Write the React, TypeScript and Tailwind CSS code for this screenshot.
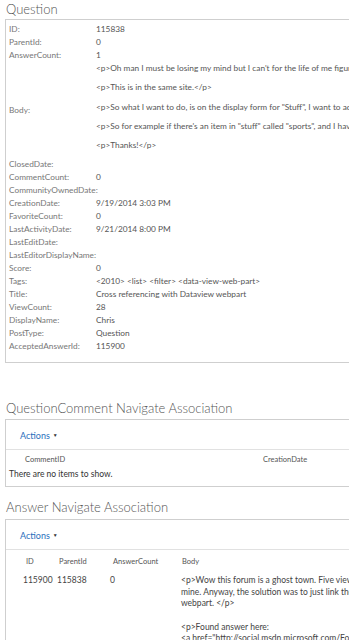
const fields: [string, string][] = [
  ["ID:", "115838"],
  ["ParentId:", "0"],
  ["AnswerCount:", "1"],
]

const bodyLines = [
  "<p>Oh man I must be losing my mind but I can't for the life of me figure out how to do this.</p>",
  "<p>This is in the same site.</p>",
  "<p>So what I want to do, is on the display form for \"Stuff\", I want to add a list of related items.</p>",
  "<p>So for example if there's an item in \"stuff\" called \"sports\", and I have a list of things.</p>",
  "<p>Thanks!</p>",
]

const moreFields: [string, string][] = [
  ["ClosedDate:", ""],
  ["CommentCount:", "0"],
  ["CommunityOwnedDate:", ""],
  ["CreationDate:", "9/19/2014 3:03 PM"],
  ["FavoriteCount:", "0"],
  ["LastActivityDate:", "9/21/2014 8:00 PM"],
  ["LastEditDate:", ""],
  ["LastEditorDisplayName:", ""],
  ["Score:", "0"],
  ["Tags:", "<2010> <list> <filter> <data-view-web-part>"],
  ["Title:", "Cross referencing with Dataview webpart"],
  ["ViewCount:", "28"],
  ["DisplayName:", "Chris"],
  ["PostType:", "Question"],
  ["AcceptedAnswerId:", "115900"],
]

function Field({ label, value }: { label: string; value: string }) {
  return (
    <div className="flex h-[13px] items-center leading-[13px]">
      <div className="w-[87px] shrink-0 whitespace-nowrap text-[#777]">{label}</div>
      <div className="whitespace-nowrap text-[#555]">{value}</div>
    </div>
  )
}

function Heading({ children }: { children: string }) {
  return <h2 className="pl-[6px] text-[13px] font-light leading-[16px] text-[#555]">{children}</h2>
}

function ActionsBar() {
  return (
    <div className="flex h-[30px] items-center border-b border-[#e1e1e1] pl-[14px] pt-[2px] text-[9px] text-[#2a6ebb]">
      Actions
      <span className="ml-[3px] text-[5px] text-[#333]">▼</span>
    </div>
  )
}

export default function App() {
  return (
    <div className="h-[640px] w-[349px] overflow-hidden bg-white font-['Lato',sans-serif]">
      <div className="pt-[1px]">
        <Heading>Question</Heading>
      </div>
      <div className="ml-[5px] mt-[2px] w-[420px] border border-[#cfcfcf] pb-[9px] pl-[3px] pt-[3px] text-[8.3px]">
        {fields.map(([l, v]) => <Field key={l} label={l} value={v} />)}
        <div className="flex items-center">
          <div className="w-[87px] shrink-0 text-[#777]">Body:</div>
          <div className="flex flex-col gap-[6.3px] pb-[6px] text-[#555]">
            {bodyLines.map((b) => (
              <p key={b} className="h-[13px] whitespace-nowrap leading-[13px]">{b}</p>
            ))}
          </div>
        </div>
        {moreFields.map(([l, v]) => <Field key={l} label={l} value={v} />)}
      </div>

      <div className="mt-[37px]">
        <Heading>QuestionComment Navigate Association</Heading>
      </div>
      <div className="ml-[5px] mt-[3px] w-[420px] border border-[#cfcfcf] pb-[5px]">
        <ActionsBar />
        <div className="flex h-[15px] items-end text-[7.5px] leading-[10px] text-[#555]">
          <div className="w-[257px] shrink-0 pl-[19px]">CommentID</div>
          <div>CreationDate</div>
        </div>
        <div className="pl-[3px] pt-[3px] text-[8.5px] leading-[13px] text-[#333]">There are no items to show.</div>
      </div>

      <div className="mt-[12px]">
        <Heading>Answer Navigate Association</Heading>
      </div>
      <div className="ml-[5px] mt-[4px] w-[420px] border border-[#cfcfcf]">
        <ActionsBar />
        <div className="flex h-[17px] items-end pl-[17px] text-[7.5px] leading-[10px] text-[#555]">
          <div className="w-[34px] shrink-0 pl-[3px]">ID</div>
          <div className="w-[53px] shrink-0 pl-[2px]">ParentId</div>
          <div className="w-[71px] shrink-0 pl-[3px]">AnswerCount</div>
          <div className="pl-[1px]">Body</div>
        </div>
        <div className="flex pl-[17px] pt-[8px] text-[8.5px] leading-[11.6px] text-[#444]">
          <div className="w-[34px] shrink-0">115900</div>
          <div className="w-[53px] shrink-0">115838</div>
          <div className="w-[71px] shrink-0">0</div>
          <div className="whitespace-pre">
            {"<p>Wow this forum is a ghost town. Five views and no replies, and four of them are\nmine. Anyway, the solution was to just link the two lists with the dataview\nwebpart. </p>\n\n<p>Found answer here:\n<a href=\"http://social.msdn.microsoft.com/Forums/\">"}
          </div>
        </div>
      </div>
    </div>
  )
}
